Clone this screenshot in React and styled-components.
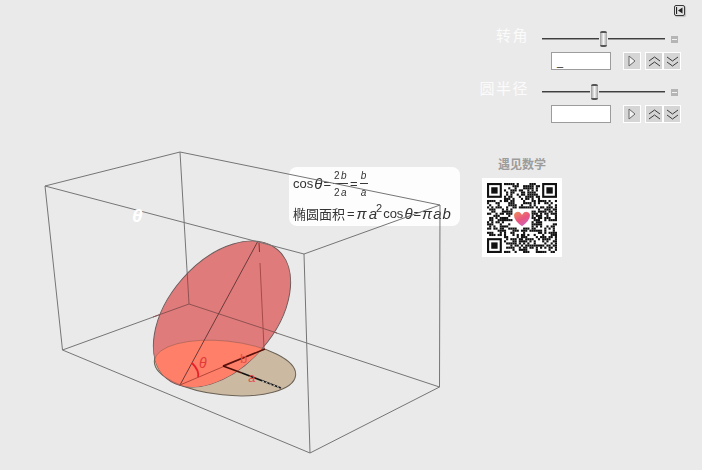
import React from "react";
import styled, { createGlobalStyle } from "styled-components";

const Global = createGlobalStyle`
  html, body { margin: 0; padding: 0; background: #eaeaea; }
  body { overflow: hidden; font-family: "Liberation Sans", "Noto Sans CJK SC", sans-serif; }
`;

const Page = styled.div`
  position: relative;
  width: 702px;
  height: 470px;
  background: #eaeaea;
  overflow: hidden;
  display: flex;
  justify-content: flex-end;
`;

const Scene = styled.svg`
  position: absolute;
  inset: 0;
  width: 702px;
  height: 470px;
  z-index: 2;
  pointer-events: none;
`;

const FormulaCard = styled.div`
  position: absolute;
  left: 289px;
  top: 167px;
  width: 171px;
  height: 59px;
  box-sizing: border-box;
  padding: 1px 0 0 4px;
  background: #fdfdfd;
  border-radius: 8px;
  color: #333;
  display: flex;
  flex-direction: column;
  gap: 2px;
  z-index: 1;
  filter: blur(0.35px);
`;

const MathLine = styled.div`
  display: flex;
  align-items: center;
  height: ${(p) => p.$h}px;
  font-size: ${(p) => p.$size}px;
  white-space: nowrap;
`;

const Var = styled.i`
  font-family: "Liberation Sans", sans-serif;
  font-style: italic;
  font-size: ${(p) => p.$size || 15}px;
  margin-left: ${(p) => p.$ml || 0}px;
`;

const Op = styled.span`
  margin: 0 ${(p) => p.$m ?? 2}px;
`;

const Fraction = styled.span`
  display: inline-flex;
  flex-direction: column;
  align-items: center;
  font-size: 10px;
  line-height: 13px;
  letter-spacing: 1.5px;
  margin: 0 1px;
`;

const FractionTop = styled.span`
  display: block;
  padding: 0 0 1px 1px;
  border-bottom: 1px solid #3a3a3a;
`;

const FractionBottom = styled.span`
  display: block;
  padding: 2px 0 0 1px;
`;

const Sup = styled.span`
  font-size: 11px;
  line-height: 0;
  position: relative;
  top: -5px;
  margin-left: -1px;
`;

const Panel = styled.aside`
  position: relative;
  z-index: 3;
  width: 232px;
  height: 470px;
  box-sizing: border-box;
  padding-top: 5px;
  display: flex;
  flex-direction: column;
`;

const TopBar = styled.div`
  height: 12px;
  display: flex;
  justify-content: flex-end;
  padding-right: 17px;
  margin-bottom: 12px;
`;

const Collapse = styled.div`
  width: 11px;
  height: 11px;
  box-sizing: border-box;
  border: 1px solid #3a3a3a;
  border-radius: 2px;
  background: #e4e4e4;
  box-shadow: 1px 1px 1px #bdbdbd;
  display: flex;
  align-items: center;
  justify-content: center;
`;

const ControlGroup = styled.section`
  display: flex;
  flex-direction: column;
  margin-bottom: ${(p) => p.$mb}px;
`;

const SliderRow = styled.div`
  display: grid;
  grid-template-columns: 58px 123px 7px;
  column-gap: 14px;
  align-items: center;
  height: 20px;
`;

const Label = styled.div`
  text-align: right;
  font-size: 15px;
  letter-spacing: 1.5px;
  color: #fbfbfb;
  line-height: 20px;
  margin-top: -6px;
  margin-right: -1px;
  white-space: nowrap;
`;

const Track = styled.div`
  position: relative;
  height: 1px;
  margin-top: -1px;
  background: #3f3f3f;
  box-shadow: 0 1px 0 #9a9a9a;
`;

const Thumb = styled.div`
  position: absolute;
  top: -7px;
  width: 7px;
  height: 16px;
  box-sizing: border-box;
  border-radius: 2px;
  border-top: 2px solid #555;
  border-bottom: 2px solid #555;
  background: linear-gradient(90deg, #9a9a9a, #f4f4f4 50%, #a0a0a0);
  box-shadow: 0 0 0 1px #eaeaea;
`;

const MiniButton = styled.div`
  width: 7px;
  height: 7px;
  margin-left: -8px;
  background: #b5b5b5;
  display: flex;
  align-items: center;
  justify-content: center;
  &::after {
    content: "";
    width: 5px;
    height: 1px;
    background: #f2f2f2;
  }
`;

const InputRow = styled.div`
  display: flex;
  align-items: stretch;
  height: 18px;
  margin-top: 3px;
  padding-left: 81px;
`;

const Field = styled.div`
  width: 60px;
  box-sizing: border-box;
  border: 1px solid #9c9c9c;
  background: #fff;
  margin-right: 12px;
  padding: 3px 0 0 5px;
  font-size: 11px;
  line-height: 12px;
  color: #222;
`;

const StepButton = styled.div`
  width: 18px;
  height: 18px;
  box-sizing: border-box;
  background: #d5d5d5;
  border: 1px solid #fff;
  margin-right: ${(p) => p.$mr || 0}px;
  display: flex;
  align-items: center;
  justify-content: center;
`;

const QrBlock = styled.section`
  display: flex;
  flex-direction: column;
  width: 80px;
  margin-left: 12px;
  align-items: center;
`;

const QrTitle = styled.div`
  font-size: 12px;
  font-weight: 700;
  line-height: 14px;
  color: #9c9c9c;
  margin-bottom: 6px;
`;

const QrCard = styled.div`
  width: 80px;
  height: 79px;
  background: #fff;
  display: flex;
  align-items: center;
  justify-content: center;
`;

const QrArt = styled.svg`
  width: 70px;
  height: 70px;
  filter: blur(0.5px);
`;

const QR_N = 33;
function qrCells() {
  let seed = 20231;
  const rnd = () => {
    seed = (seed * 1103515245 + 12345) & 0x7fffffff;
    return (seed >> 11) % 100;
  };
  const out = [];
  const inFinder = (x, y) =>
    (x < 8 && y < 8) || (x >= QR_N - 8 && y < 8) || (x < 8 && y >= QR_N - 8);
  for (let y = 0; y < QR_N; y++) {
    for (let x = 0; x < QR_N; x++) {
      const dark = rnd() < 52;
      if (inFinder(x, y) || !dark) continue;
      if (Math.abs(x - 16) < 5 && Math.abs(y - 16) < 5) continue;
      out.push([x, y]);
    }
  }
  return out;
}

function Finder({ x, y }) {
  return (
    <g transform={`translate(${x} ${y})`}>
      <rect x="0.5" y="0.5" width="6" height="6" fill="none" stroke="#111" />
      <rect x="2" y="2" width="3" height="3" fill="#111" />
    </g>
  );
}

function QrCode() {
  return (
    <QrArt viewBox={`0 0 ${QR_N} ${QR_N}`}>
      <defs>
        <linearGradient id="heart" x1="0.2" y1="0" x2="0.8" y2="1">
          <stop offset="0" stopColor="#ef8a5c" />
          <stop offset="0.5" stopColor="#e8557f" />
          <stop offset="1" stopColor="#c66ad2" />
        </linearGradient>
      </defs>
      {qrCells().map(([x, y]) => (
        <rect key={`${x}-${y}`} x={x} y={y} width="1" height="1" fill="#111" />
      ))}
      <Finder x={0} y={0} />
      <Finder x={QR_N - 7} y={0} />
      <Finder x={0} y={QR_N - 7} />
      <path
        d="M16.5 20.8 C14 19 12.4 17.4 12.4 15.4 C12.4 13.2 15.2 12.4 16.5 14.4 C17.8 12.4 20.6 13.2 20.6 15.4 C20.6 17.4 19 19 16.5 20.8 Z"
        fill="url(#heart)"
        stroke="#fff"
        strokeWidth="0.7"
      />
    </QrArt>
  );
}

const PlayIcon = () => (
  <svg width="8" height="12" viewBox="0 0 8 12">
    <path d="M1 1 L7 6 L1 11 Z" fill="#f2f2f2" stroke="#666" strokeWidth="1" />
  </svg>
);
const UpIcon = () => (
  <svg width="13" height="11" viewBox="0 0 13 11">
    <path d="M1 5 L6.5 1 L12 5 M1 10 L6.5 6 L12 10" fill="none" stroke="#3c3c3c" strokeWidth="1" />
  </svg>
);
const DownIcon = () => (
  <svg width="13" height="11" viewBox="0 0 13 11">
    <path d="M1 1 L6.5 5 L12 1 M1 6 L6.5 10 L12 6" fill="none" stroke="#3c3c3c" strokeWidth="1" />
  </svg>
);

function Control({ label, thumb, value, mb }) {
  return (
    <ControlGroup $mb={mb}>
      <SliderRow>
        <Label>{label}</Label>
        <Track>
          <Thumb style={{ left: thumb }} />
        </Track>
        <MiniButton />
      </SliderRow>
      <InputRow>
        <Field>{value}</Field>
        <StepButton $mr={4}>
          <PlayIcon />
        </StepButton>
        <StepButton>
          <UpIcon />
        </StepButton>
        <StepButton>
          <DownIcon />
        </StepButton>
      </InputRow>
    </ControlGroup>
  );
}

const line = { stroke: "#757575", strokeWidth: 1, fill: "none" };

function Box3D() {
  return (
    <Scene viewBox="0 0 702 470">
      <defs>
        <clipPath id="redClip">
          <ellipse cx="222" cy="314" rx="85" ry="53" transform="rotate(-49 222 314)" />
        </clipPath>
      </defs>

      <g {...line}>
        <path d="M180 152 L189 304 M62.5 350 L189 304 L439.5 387" />
      </g>

      <ellipse cx="225" cy="368" rx="71" ry="27" transform="rotate(6 225 368)" fill="#ccb9a2" stroke="#6b6256" strokeWidth="1" />
      <ellipse cx="222" cy="314" rx="85" ry="53" transform="rotate(-49 222 314)" fill="#e07b7b" stroke="#6d5a5a" strokeWidth="1" />
      <g clipPath="url(#redClip)">
        <ellipse cx="225" cy="368" rx="71" ry="27" transform="rotate(6 225 368)" fill="#ff7f68" stroke="#8a5a50" strokeWidth="0.5" />
      </g>
      <path d="M189 304 L153 317 M189 304 L277 333" stroke="#8f5252" strokeWidth="1" fill="none" />
      <path d="M183 200 L189 304" stroke="#8f5252" strokeWidth="1" fill="none" clipPath="url(#redClip)" />

      <path d="M180 385 L258 241" stroke="#6a3a3a" strokeWidth="1" fill="none" />
      <path d="M180 385 L265 349" stroke="#b2473c" strokeWidth="1" fill="none" />
      <path d="M259 243 L259.5 252" stroke="#8c2f2f" strokeWidth="1" />
      <path d="M260 263 L264 348" stroke="#a84a4a" strokeWidth="1" />

      <path d="M223 366 L265 349" stroke="#5a120c" strokeWidth="1.5" />
      <path d="M223 366 L242 373" stroke="#4a0f0a" strokeWidth="1.5" />
      <path d="M242 373 L281 388" stroke="#111" strokeWidth="1.5" />
      <path d="M262 381 L281 388" stroke="#fff" strokeWidth="0.8" strokeDasharray="2 2" />

      <path d="M192 363 C197 368 199 373 198 377" stroke="#e8202a" strokeWidth="1.8" fill="none" />
      <text x="199" y="368" fontFamily="Liberation Sans, sans-serif" fontStyle="italic" fontSize="14" fill="#e03a3a">θ</text>
      <text x="240" y="363" fontFamily="Liberation Sans, sans-serif" fontSize="13" fill="#e2504a">b</text>
      <text x="248" y="382" fontFamily="Liberation Sans, sans-serif" fontSize="13" fill="#e2504a">a</text>

      <g {...line}>
        <path d="M45 186 L180 152 L440 205 L304 254 Z" />
        <path d="M45 186 L62.5 350 L310 453 L439.5 387 L440 205" />
        <path d="M304 254 L310 453" />
      </g>

      <text x="132" y="222" fontFamily="Liberation Sans, sans-serif" fontStyle="italic" fontWeight="700" fontSize="19" fill="#fff">θ</text>
    </Scene>
  );
}

export default function App() {
  return (
    <Page>
      <Global />
      <FormulaCard>
        <MathLine $h={31} $size={13}>
          cos<Var $size={15} $ml={1}>θ</Var>
          <Op $m={1}>=</Op>
          <Fraction>
            <FractionTop>2<Var $size={10}>b</Var></FractionTop>
            <FractionBottom>2<Var $size={10}>a</Var></FractionBottom>
          </Fraction>
          <Op $m={1}>=</Op>
          <Fraction>
            <FractionTop><Var $size={10}>b</Var></FractionTop>
            <FractionBottom><Var $size={10}>a</Var></FractionBottom>
          </Fraction>
        </MathLine>
        <MathLine $h={24} $size={13}>
          椭圆面积<Op>=</Op>
          <Var>π</Var>
          <Var $ml={2}>a</Var>
          <Sup>2</Sup>
          <Op $m={1}>cos</Op>
          <Var>θ</Var>
          <Op $m={1}>=</Op>
          <Var>π</Var>
          <Var $ml={1}>a</Var>
          <Var $ml={1}>b</Var>
        </MathLine>
      </FormulaCard>

      <Box3D />

      <Panel>
        <TopBar>
          <Collapse>
            <svg width="7" height="7" viewBox="0 0 7 7">
              <path d="M0.5 0 V7" stroke="#222" strokeWidth="1.2" />
              <path d="M6.5 0.5 V6.5 L2 3.5 Z" fill="#222" />
            </svg>
          </Collapse>
        </TopBar>
        <Control label="转角" thumb={58} value="_" mb={12} />
        <Control label="圆半径" thumb={49} value="" mb={35} />
        <QrBlock>
          <QrTitle>遇见数学</QrTitle>
          <QrCard>
            <QrCode />
          </QrCard>
        </QrBlock>
      </Panel>
    </Page>
  );
}
